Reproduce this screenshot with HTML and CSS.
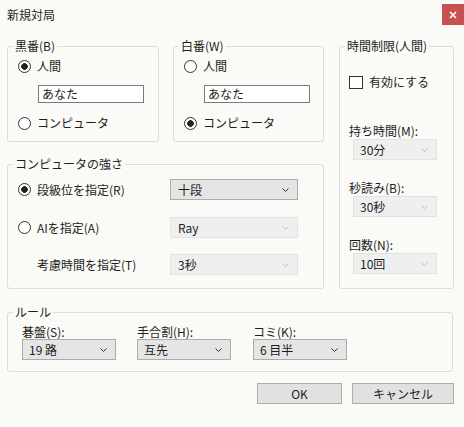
FILE: index.html
```html
<!DOCTYPE html>
<html lang="ja">
<head>
    <meta charset="UTF-8">
    <title>新規対局</title>
    <link rel="stylesheet" href="styles.css">
</head>
<body>
    <div class="dialog">
        <div class="titlebar">
            <span class="title">新規対局</span>
            <button class="close-btn" aria-label="閉じる">
                <svg width="8" height="8" viewBox="0 0 8 8">
                    <path d="M1 1L7 7M7 1L1 7" stroke="#fff" stroke-width="1.6"></path>
                </svg>
            </button>
        </div>

        <div class="main">
            <div class="left-col">
                <div class="player-row">
                    <fieldset class="group player black">
                        <legend>黒番(B)</legend>
                        <div class="player-body">
                            <label class="option"><span class="radio checked"></span>人間</label>
                            <div class="textbox">あなた</div>
                            <label class="option last"><span class="radio"></span>コンピュータ</label>
                        </div>
                    </fieldset>
                    <fieldset class="group player white">
                        <legend>白番(W)</legend>
                        <div class="player-body">
                            <label class="option"><span class="radio"></span>人間</label>
                            <div class="textbox">あなた</div>
                            <label class="option last"><span class="radio checked"></span>コンピュータ</label>
                        </div>
                    </fieldset>
                </div>

                <fieldset class="group strength">
                    <legend>コンピュータの強さ</legend>
                    <div class="strength-body">
                        <div class="strength-row">
                            <label class="option row-label"><span class="radio checked"></span>段級位を指定(R)</label>
                            <div class="combo wide">
                                <span>十段</span>
                                <svg class="chevron" width="7" height="4" viewBox="0 0 7 4"><path d="M0.5 0.5L3.5 3.5L6.5 0.5"></path></svg>
                            </div>
                        </div>
                        <div class="strength-row second">
                            <label class="option row-label"><span class="radio"></span>AIを指定(A)</label>
                            <div class="combo wide disabled">
                                <span>Ray</span>
                                <svg class="chevron" width="7" height="4" viewBox="0 0 7 4"><path d="M0.5 0.5L3.5 3.5L6.5 0.5"></path></svg>
                            </div>
                        </div>
                        <div class="strength-row third">
                            <span class="row-label indent">考慮時間を指定(T)</span>
                            <div class="combo wide disabled">
                                <span>3秒</span>
                                <svg class="chevron" width="7" height="4" viewBox="0 0 7 4"><path d="M0.5 0.5L3.5 3.5L6.5 0.5"></path></svg>
                            </div>
                        </div>
                    </div>
                </fieldset>
            </div>

            <fieldset class="group time">
                <legend>時間制限(人間)</legend>
                <div class="time-body">
                    <label class="option"><span class="checkbox"></span>有効にする</label>
                    <div class="field-label first">持ち時間(M):</div>
                    <div class="combo time-combo disabled">
                        <span>30分</span>
                        <svg class="chevron" width="7" height="4" viewBox="0 0 7 4"><path d="M0.5 0.5L3.5 3.5L6.5 0.5"></path></svg>
                    </div>
                    <div class="field-label">秒読み(B):</div>
                    <div class="combo time-combo disabled">
                        <span>30秒</span>
                        <svg class="chevron" width="7" height="4" viewBox="0 0 7 4"><path d="M0.5 0.5L3.5 3.5L6.5 0.5"></path></svg>
                    </div>
                    <div class="field-label">回数(N):</div>
                    <div class="combo time-combo disabled">
                        <span>10回</span>
                        <svg class="chevron" width="7" height="4" viewBox="0 0 7 4"><path d="M0.5 0.5L3.5 3.5L6.5 0.5"></path></svg>
                    </div>
                </div>
            </fieldset>
        </div>

        <fieldset class="group rules">
            <legend>ルール</legend>
            <div class="rules-body">
                <div class="rule">
                    <div class="rule-label">碁盤(S):</div>
                    <div class="combo rule-combo">
                        <span>19 路</span>
                        <svg class="chevron" width="7" height="4" viewBox="0 0 7 4"><path d="M0.5 0.5L3.5 3.5L6.5 0.5"></path></svg>
                    </div>
                </div>
                <div class="rule">
                    <div class="rule-label">手合割(H):</div>
                    <div class="combo rule-combo">
                        <span>互先</span>
                        <svg class="chevron" width="7" height="4" viewBox="0 0 7 4"><path d="M0.5 0.5L3.5 3.5L6.5 0.5"></path></svg>
                    </div>
                </div>
                <div class="rule">
                    <div class="rule-label">コミ(K):</div>
                    <div class="combo rule-combo">
                        <span>6 目半</span>
                        <svg class="chevron" width="7" height="4" viewBox="0 0 7 4"><path d="M0.5 0.5L3.5 3.5L6.5 0.5"></path></svg>
                    </div>
                </div>
            </div>
        </fieldset>

        <div class="buttons">
            <button class="btn ok">OK</button>
            <button class="btn cancel">キャンセル</button>
        </div>
    </div>
</body>
</html>
```

FILE: styles.css
```css
:root {
    --color-bg: #fafaf6;
    --color-text: #1e1e1e;
    --color-group: #dcdcdc;
    --color-combo: #e5e5e5;
    --color-combo-border: #acacac;
    --color-combo-off: #efefef;
    --color-combo-off-border: #e2e2e2;
    --color-close: #c75050;
}

* {
    margin: 0;
    padding: 0;
    box-sizing: border-box;
}

body {
    font-family: "Noto Sans CJK JP", "Noto Sans", sans-serif;
    font-size: 12px;
    line-height: 16px;
    color: var(--color-text);
    background-color: var(--color-bg);
}

.dialog {
    width: 464px;
    height: 427px;
    background-color: var(--color-bg);
    overflow: hidden;
}

.titlebar {
    height: 30px;
    display: flex;
    justify-content: space-between;
    align-items: flex-start;
}

.title {
    padding-left: 7px;
    line-height: 30px;
}

.close-btn {
    width: 22px;
    height: 21px;
    margin-top: 4px;
    border: none;
    background-color: var(--color-close);
    display: flex;
    align-items: center;
    justify-content: center;
}

.main {
    margin-top: 8px;
    padding-left: 7px;
    display: flex;
    gap: 15px;
}

.left-col {
    width: 317px;
}

.player-row {
    display: flex;
    gap: 14px;
}

/* group boxes */
.group {
    margin: 0;
    padding: 0;
    min-width: 0;
    border: 1px solid var(--color-group);
    border-radius: 3px;
}

.group legend {
    margin-left: 5px;
    padding: 0 2px;
    line-height: 16px;
}

.player.black {
    width: 152px;
}

.player.white {
    width: 151px;
}

.player-body {
    padding: 4px 0 10px 10px;
}

.option {
    height: 16px;
    display: flex;
    align-items: center;
    gap: 6px;
    white-space: nowrap;
}

.option.last {
    margin-top: 12px;
}

.radio {
    width: 13px;
    height: 13px;
    border: 1px solid #333;
    border-radius: 50%;
    background-color: #fff;
    flex: none;
}

.radio.checked {
    background: radial-gradient(circle, #222 0 3px, #fff 3.6px);
}

.checkbox {
    width: 14px;
    height: 13px;
    border: 1px solid #333;
    background-color: #fff;
    flex: none;
}

.textbox {
    width: 106px;
    height: 18px;
    margin: 11px 0 0 20px;
    padding-left: 3px;
    border: 1px solid #7a7a7a;
    background-color: #fff;
    line-height: 16px;
}

/* combo boxes */
.combo {
    height: 21px;
    padding: 0 8px 0 7px;
    display: flex;
    align-items: center;
    justify-content: space-between;
    border: 1px solid var(--color-combo-border);
    background-color: var(--color-combo);
}

.chevron path {
    fill: none;
    stroke: #333;
    stroke-width: 1;
}

.combo.disabled {
    border-color: var(--color-combo-off-border);
    background-color: var(--color-combo-off);
}

.combo.disabled .chevron path {
    stroke: #bdbdbd;
}

.strength {
    margin-top: 14px;
}

.strength-body {
    padding: 7px 0 13px 10px;
}

.strength-row {
    height: 21px;
    display: flex;
    align-items: center;
}

.strength-row.second {
    margin-top: 17px;
}

.strength-row.third {
    margin-top: 16px;
}

.row-label {
    width: 152px;
    flex: none;
}

.row-label.indent {
    padding-left: 19px;
}

.combo.wide {
    width: 128px;
}

.time {
    width: 115px;
}

.time-body {
    padding: 20px 0 0 9px;
}

.field-label {
    margin-top: 20px;
}

.field-label.first {
    margin-top: 33px;
}

.combo.time-combo {
    width: 84px;
    margin-left: 4px;
    padding-left: 6px;
}

.rules {
    width: 446px;
    margin: 15px 0 0 7px;
}

.rules-body {
    padding: 5px 0 11px 14px;
    display: grid;
    grid-template-columns: 115px 116px 94px;
}

.rule-label {
    line-height: 14px;
}

.combo.rule-combo {
    width: 94px;
    padding-left: 6px;
}

.buttons {
    margin-top: 11px;
    padding-right: 10px;
    display: flex;
    justify-content: flex-end;
    gap: 10px;
}

.btn {
    height: 21px;
    border: 1px solid #adadad;
    background-color: #e1e1e1;
    font-family: inherit;
    font-size: 12px;
    color: var(--color-text);
}

.btn.ok {
    width: 85px;
}

.btn.cancel {
    width: 102px;
}
```
